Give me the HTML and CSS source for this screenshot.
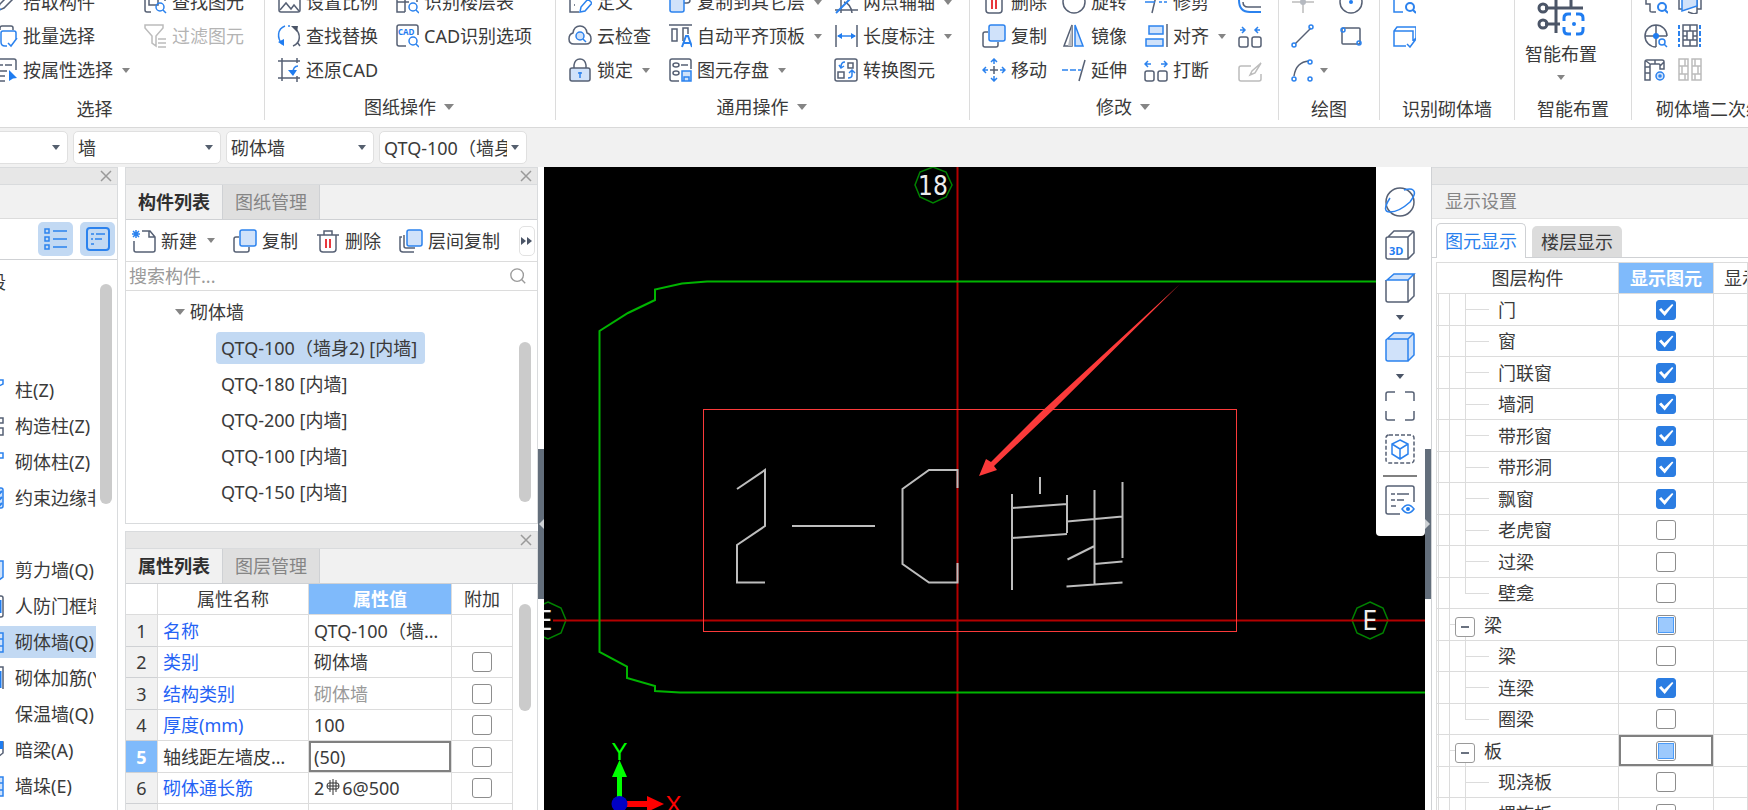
FILE: index.html
```html
<!DOCTYPE html>
<html lang="zh-CN">
<head>
<meta charset="utf-8">
<title>砌体墙</title>
<link rel="stylesheet" href="styles.css">
</head>
<body>
<svg class="sprite" aria-hidden="true">
  <symbol id="caret" viewBox="0 0 10 6"><path d="M0 0h10L5 6z" fill="currentColor"/></symbol>
  <symbol id="close" viewBox="0 0 12 12"><path d="M1 1l10 10M11 1L1 11" class="g2"/></symbol>
  <symbol id="pick" viewBox="0 0 24 24"><path d="M3 21l3-7L16 4l4 4L10 18z" class="d"/><path d="M3 21l4-2" class="b"/></symbol>
  <symbol id="batch" viewBox="0 0 24 24"><path d="M6 6V4q0-2 2-2h9q2 0 2 2v2M2 18h4" class="d"/><path d="M22 15V9q0-2-2-2H9Q7 7 7 9v9q0 4 4 4h2M14 19l3 3 6-8" class="b"/></symbol>
  <symbol id="byprop" viewBox="0 0 24 24"><path d="M2 1h18q2 0 2 2v9M4 7h5M11 7h7M4 13h9M4 18h7M2 23h9" class="d"/><path d="M15 12l8 8-4 .5-4 2.500z" class="bf"/></symbol>
  <symbol id="findel" viewBox="0 0 24 24"><path d="M8 22H4q-2 0-2-2V3h20v8M6 9h9v6H6z" class="d"/><circle cx="17" cy="17" r="4" class="b"/><path d="M20 20l3 3" class="b"/></symbol>
  <symbol id="filter" viewBox="0 0 24 24"><path d="M2 1h18v3l-7 8v10l-4-3v-7L2 4zM15 15h8M15 19h8M15 23h8" class="g"/></symbol>
  <symbol id="scale" viewBox="0 0 24 24"><rect x="2" y="3" width="21" height="19" rx="2" class="d"/><path d="M3 20l6-7 5 6 3-4 5 6" class="d"/></symbol>
  <symbol id="swap" viewBox="0 0 24 24"><path d="M8 2C0 5 0 14 5 20M13 2h-2" class="b"/><path d="M1 18l6 4V15z" class="bf"/><path d="M16 22c8-3 8-12 2-18M20 18l3 4" class="d"/><path d="M14 2l7 0-1 6z" class="df"/></symbol>
  <symbol id="restore" viewBox="0 0 24 24"><path d="M5 0v23M1 3h22M1 20h22M20 0v5M20 18v6" class="d"/><path d="M21 8q-5 0-5 7" class="b"/><path d="M11 12h9l-4 6z" class="bf"/></symbol>
  <symbol id="floor" viewBox="0 0 24 24"><path d="M10 22H2V4h20v8M2 12h12M10 4v18" class="d"/><circle cx="18" cy="17" r="4" class="b"/><path d="M21 20l3 3" class="b"/></symbol>
  <symbol id="cadopt" viewBox="0 0 24 24"><path d="M11 22H4q-2 0-2-2V3q0-2 2-2h17q2 0 2 2v8" class="d"/><text x="3" y="11" class="tiny">CAD</text><circle cx="18" cy="17" r="4" class="b"/><path d="M21 20l3 3" class="b"/></symbol>
  <symbol id="define" viewBox="0 0 24 24"><path d="M2 2v20h9M6 9h1M6 15h1M10 9h4" class="d"/><path d="M12 22l1-5 7-8 4 4-7 8z" class="b"/></symbol>
  <symbol id="cloud" viewBox="0 0 24 24"><path d="M6 20q-5 0-5-5 0-5 4-6 1-7 7-7t7 7q4 1 4 6 0 5-5 5z" class="d"/><circle cx="12" cy="12" r="4" class="bp"/><path d="M15 15l3 3" class="b"/></symbol>
  <symbol id="lock" viewBox="0 0 24 24"><path d="M6 11V7q1-6 6-6t6 6v4" class="d"/><rect x="2" y="10" width="20" height="13" rx="2" class="dp"/><path d="M12 14v6M10 15h4" class="b"/></symbol>
  <symbol id="copyfl" viewBox="0 0 24 24"><path d="M9 8V4q0-2 2-2h9q2 0 2 2v6q0 3-3 3h-3" class="d"/><path d="M4 8h10q2 0 2 2v10q0 2-2 2H4q-2 0-2-2V10q0-2 2-2z" class="bp"/></symbol>
  <symbol id="alignt" viewBox="0 0 24 24"><path d="M1 1h23M4 5h5v12H4zM20 10V4h-5v13" class="d"/><path d="M14 23l4-11h2l4 11M15 19h7" class="b2"/></symbol>
  <symbol id="disk" viewBox="0 0 24 24"><path d="M11 23H4q-2 0-2-2V3q0-2 2-2h17q2 0 2 2v8M13 7h7" class="d"/><ellipse cx="8" cy="7" rx="3" ry="2" class="d"/><ellipse cx="8" cy="15" rx="3" ry="2" class="d"/><path d="M14 13h9v10h-9zM16 23v-4h5v4" class="bp"/></symbol>
  <symbol id="aux" viewBox="0 0 24 24"><path d="M7 2v21M1 20h23M10 12q7 2 8 11" class="d"/><path d="M2 23L23 2" class="b2"/></symbol>
  <symbol id="dim" viewBox="0 0 24 24"><path d="M2 1v22M23 1v22" class="d"/><path d="M4 12h17" class="b"/><path d="M3 12l5-3v6zM22 12l-5-3v6z" class="bf"/></symbol>
  <symbol id="convert" viewBox="0 0 24 24"><rect x="1" y="1" width="22" height="22" rx="2" class="d"/><path d="M14 5h5v5h-5zM4 14h6v6H4z" class="d"/><path d="M11 4q-4 0-4 5M5 7l2 3 3-2M18 13v4q0 3-4 3M15 15l3-3 3 3" class="b"/></symbol>
  <symbol id="trash" viewBox="0 0 24 24"><path d="M1 6h22M8 6V2h8v4M4 6v14q0 3 3 3h10q3 0 3-3V6" class="d"/><path d="M10 10v9M14 10v9" class="r"/></symbol>
  <symbol id="copy" viewBox="0 0 24 24"><path d="M6 8H3Q1 8 1 10v11q0 2 2 2h11q2 0 2-2v-3" class="d"/><rect x="7" y="1" width="16" height="16" rx="2" class="bp"/></symbol>
  <symbol id="move" viewBox="0 0 24 24"><path d="M12 8v8M8 12h8" class="d"/><path d="M12 1v5M12 18v5M1 12h5M18 12h5M9 4l3-3 3 3M9 20l3 3 3-3M4 9l-3 3 3 3M20 9l3 3-3 3" class="b"/></symbol>
  <symbol id="rotate" viewBox="0 0 24 24"><circle cx="12" cy="12" r="11" class="d"/></symbol>
  <symbol id="mirror" viewBox="0 0 24 24"><path d="M10 1v21H2z" class="d"/><path d="M10 1v21H6z" class="gf"/><path d="M13 1v21h8z" class="bp"/></symbol>
  <symbol id="extend" viewBox="0 0 24 24"><path d="M23 2l-6 21" class="d"/><path d="M0 12h6M8 12h6M16 12h3" class="b"/></symbol>
  <symbol id="trim" viewBox="0 0 24 24"><path d="M13 2L8 23" class="d"/><path d="M1 12h10M15 12h3M20 12h3" class="b"/></symbol>
  <symbol id="align" viewBox="0 0 24 24"><path d="M23 0v23" class="d"/><path d="M5 2h14v8H5zM2 15h17v7H2z" class="bp"/></symbol>
  <symbol id="split" viewBox="0 0 24 24"><rect x="1" y="13" width="9" height="10" rx="2" class="d"/><rect x="14" y="13" width="9" height="10" rx="2" class="d"/><path d="M1 6h6M4 3L1 6l3 3M17 6h6M20 3l3 3-3 3" class="b"/></symbol>
  <symbol id="merge" viewBox="0 0 24 24"><rect x="1" y="13" width="9" height="10" rx="2" class="d"/><rect x="14" y="13" width="9" height="10" rx="2" class="d"/><path d="M2 6h5M4 3l3 3-3 3M17 6h5M20 3l-3 3 3 3" class="b"/></symbol>
  <symbol id="offset" viewBox="0 0 24 24"><path d="M23 17H10q-5 0-5-5" class="d"/><path d="M23 22H12Q1 22 1 10" class="b2"/></symbol>
  <symbol id="editg" viewBox="0 0 24 24"><path d="M13 8H3q-2 0-2 2v11q0 2 2 2h18q2 0 2-2v-5M12 17l2-4 9-8-6 10z" class="g"/></symbol>
  <symbol id="point" viewBox="0 0 24 24"><path d="M12 1v22M1 12h22" class="g"/><circle cx="12" cy="12" r="3" class="gf"/></symbol>
  <symbol id="line" viewBox="0 0 24 24"><path d="M4 20L20 4" class="d"/><circle cx="3" cy="21" r="2" class="b"/><circle cx="20" cy="3" r="2" class="b"/></symbol>
  <symbol id="arc" viewBox="0 0 24 24"><path d="M3 18Q5 4 18 3" class="d"/><circle cx="3" cy="21" r="2" class="b"/><circle cx="19" cy="4" r="2" class="b"/><circle cx="19" cy="21" r="2" class="b"/></symbol>
  <symbol id="circ" viewBox="0 0 24 24"><circle cx="12" cy="12" r="11" class="d"/><circle cx="12" cy="12" r="2" class="bf"/></symbol>
  <symbol id="rect" viewBox="0 0 24 24"><rect x="3" y="4" width="18" height="16" rx="1" class="d"/><circle cx="4" cy="6" r="2" class="b"/><circle cx="20" cy="19" r="2" class="b"/></symbol>
  <symbol id="recfind" viewBox="0 0 24 24"><path d="M11 22H2V5h20v4" class="b"/><circle cx="18" cy="17" r="4" class="b2"/><path d="M21 20l3 3" class="b2"/></symbol>
  <symbol id="recok" viewBox="0 0 24 24"><path d="M14 22H2V7l3-4h19v11l-3 3M2 7h19v10M15 20l3 3 6-8" class="b"/></symbol>
  <symbol id="partfind" viewBox="0 0 24 24"><path d="M2 4v10h4v7q0 1 2 1h4" class="d"/><circle cx="18" cy="17" r="4" class="b2"/><path d="M21 20l3 3" class="b2"/></symbol>
  <symbol id="ringf" viewBox="0 0 24 24"><path d="M12 1v22M1 12h22M23 12A11 11 0 1 0 12 23" class="d"/><circle cx="12" cy="12" r="3" class="bf"/><circle cx="18" cy="18" r="3" class="b"/><path d="M20 20l3 3" class="b"/></symbol>
  <symbol id="bricks" viewBox="0 0 24 24"><path d="M5 1h14v21H5zM5 7h14M5 16h14M12 1v6M9 7v9h6V7M12 16v6M5 12h4M15 12h4" class="d"/><path d="M1 1v4M1 7v5M1 14v4M1 20v3M22 1v4M22 7v5M22 14v4M22 20v3" class="b2"/></symbol>
  <symbol id="archset" viewBox="0 0 24 24"><path d="M1 22V4q0-2 2-2h15q2 0 2 2v7h-4V7q0-1-1-1H7q-1 0-1 1v15zM1 9h5M1 15h5M11 2v4M16 8l4-4M2 3l4 3" class="d"/><circle cx="16" cy="18" r="4" class="bp"/><circle cx="16" cy="18" r="1" class="b"/></symbol>
  <symbol id="bricksg" viewBox="0 0 24 24"><path d="M1 1h9v21H1zM14 1h9v21h-9zM1 8h9M1 16h9M14 8h9M14 16h9M7 1v7M4 8v8M7 16v6M17 1v7M20 8v8M17 16v6" class="g"/></symbol>
  <symbol id="panes" viewBox="0 0 24 24"><path d="M1 4v15h4M23 4v15h-4M10 22l6 2 3-1V8" class="d"/><path d="M4 3v18l15-5V3z" class="bp"/></symbol>
  <symbol id="smart" viewBox="0 0 48 48"><path d="M19 2v41M34 2v16M8 18h38M8 34h15" class="d3"/><circle cx="6" cy="18" r="4" class="d3"/><circle cx="6" cy="34" r="4" class="d3"/><path d="M27 31v-3q0-4 4-4h3M39 24h3q4 0 4 4v3M46 37v3q0 4-4 4h-3M34 44h-3q-4 0-4-4v-3" class="b3"/><circle cx="37" cy="34" r="2" class="bf"/></symbol>
  <symbol id="new" viewBox="0 0 24 24"><path d="M10 2h8l5 6v13q0 2-2 2H4q-2 0-2-2v-9M17 2v6h6" class="d"/><path d="M4 1v8M0 5h8M1 2l6 6M7 2L1 8" class="b"/></symbol>
  <symbol id="copyst" viewBox="0 0 24 24"><path d="M3 8H1v12q0 3 3 3h11M5 6v11q0 2 2 2h9" class="d"/><rect x="8" y="1" width="15" height="16" rx="2" class="bp"/></symbol>
  <symbol id="search" viewBox="0 0 20 20"><circle cx="9" cy="9" r="7" class="g2"/><path d="M14 14l4 4" class="g2"/></symbol>
  <symbol id="list" viewBox="0 0 24 24"><path d="M9 4h14M9 12h14M9 20h14" class="b"/><path d="M1 2h4v4H1zM1 10h4v4H1zM1 18h4v4H1z" class="b"/></symbol>
  <symbol id="card" viewBox="0 0 24 24"><rect x="1" y="1" width="22" height="22" rx="3" class="b2"/><path d="M5 7h3M10 7h9M5 12h2M9 12h7M5 17h3" class="b"/></symbol>
  <symbol id="col" viewBox="0 0 24 24"><path d="M1 2h22v4l-4 2h-2v14H7V8H1z" class="b"/></symbol>
  <symbol id="colz" viewBox="0 0 24 24"><path d="M16 4h7v5h-7zM16 14h7v7h-7z" class="d"/></symbol>
  <symbol id="colc" viewBox="0 0 24 24"><path d="M2 3h21v5h-4v14H8V7H2z" class="b"/></symbol>
  <symbol id="edge" viewBox="0 0 24 24"><rect x="2" y="2" width="21" height="20" rx="2" class="bp"/><path d="M14 13l8-8M14 19l8-8M18 21l4-4" class="b2"/></symbol>
  <symbol id="shear" viewBox="0 0 24 24"><path d="M4 3h19v16l-4 3H4z" class="bp"/><path d="M19 22V6" class="b"/></symbol>
  <symbol id="doorf" viewBox="0 0 24 24"><rect x="2" y="2" width="21" height="21" rx="2" class="d"/><path d="M20 6v13" class="b3"/></symbol>
  <symbol id="wallb" viewBox="0 0 24 24"><path d="M2 3h21v19H2zM2 9h21M2 16h21M18 3v6M14 9v7M18 16v6" class="bp"/></symbol>
  <symbol id="rebar" viewBox="0 0 24 24"><path d="M2 1h21v22" class="d"/><path d="M20 5v17" class="b3"/></symbol>
  <symbol id="beam" viewBox="0 0 24 24"><path d="M2 4h21v11l-5 4H2z" class="d"/><path d="M2 3h21v8H2z" class="bf"/></symbol>
  <symbol id="orbit" viewBox="0 0 32 32"><circle cx="16" cy="16" r="14" class="d"/><path d="M6 12Q-3 26 6 26q9 0 20-10 7-9 3-12-2-2-9 0" class="b"/></symbol>
  <symbol id="cube3" viewBox="0 0 32 32"><path d="M4 8h20v22H4q-2 0-2-2V10q0-2 2-2zM4 8l6-6h18q2 0 2 2v20l-6 6M24 8l6-6" class="d"/><text x="5" y="26" class="three">3D</text></symbol>
  <symbol id="cubew" viewBox="0 0 32 32"><path d="M24 8v22H4q-2 0-2-2V8M30 2v22l-6 6" class="d"/><path d="M3 8l7-6h20l-6 6z" class="bp"/></symbol>
  <symbol id="cubeb" viewBox="0 0 32 32"><path d="M4 8h20v22H4q-2 0-2-2V9l8-7h18q2 0 2 2v20l-6 6M24 8l6-6" class="bp"/></symbol>
  <symbol id="frame" viewBox="0 0 32 32"><path d="M2 11V4q0-2 2-2h7M21 2h7q2 0 2 2v7M30 21v7q0 2-2 2h-7M11 30H4q-2 0-2-2v-7" class="d"/></symbol>
  <symbol id="dcube" viewBox="0 0 32 32"><rect x="2" y="2" width="28" height="28" rx="3" class="d dash"/><path d="M16 7l8 4v10l-8 5-8-5V11zM8 11l8 5 8-5M16 16v10" class="b"/></symbol>
  <symbol id="eyecard" viewBox="0 0 32 32"><path d="M16 30H4q-2 0-2-2V4q0-2 2-2h24q2 0 2 2v14M7 10h4M13 10h12M7 16h4M13 16h7M7 22h5" class="d"/><path d="M18 25q6-8 12 0-6 8-12 0z" class="b"/><circle cx="24" cy="25" r="2" class="bf"/></symbol>
</svg>

<header class="ribbon">
  <section class="group group-select">
    <div class="tools">
      <button class="tool"><svg><use href="#pick"/></svg>拾取构件</button>
      <button class="tool"><svg><use href="#findel"/></svg>查找图元</button>
      <button class="tool"><svg><use href="#batch"/></svg>批量选择</button>
      <button class="tool off" disabled><svg><use href="#filter"/></svg>过滤图元</button>
      <button class="tool wide"><svg><use href="#byprop"/></svg>按属性选择<svg class="caret"><use href="#caret"/></svg></button>
    </div>
    <h2 class="caption">选择</h2>
  </section>
  <section class="group group-drawing">
    <div class="tools">
      <button class="tool"><svg><use href="#scale"/></svg>设置比例</button>
      <button class="tool"><svg><use href="#floor"/></svg>识别楼层表</button>
      <button class="tool"><svg><use href="#swap"/></svg>查找替换</button>
      <button class="tool"><svg><use href="#cadopt"/></svg>CAD识别选项</button>
      <button class="tool"><svg><use href="#restore"/></svg>还原CAD</button>
    </div>
    <h2 class="caption more">图纸操作<svg class="caret big"><use href="#caret"/></svg></h2>
  </section>
  <section class="group group-common">
    <div class="tools">
      <button class="tool"><svg><use href="#define"/></svg>定义</button>
      <button class="tool"><svg><use href="#copyfl"/></svg>复制到其它层<svg class="caret"><use href="#caret"/></svg></button>
      <button class="tool"><svg><use href="#aux"/></svg>两点辅轴<svg class="caret"><use href="#caret"/></svg></button>
      <button class="tool"><svg><use href="#cloud"/></svg>云检查</button>
      <button class="tool"><svg><use href="#alignt"/></svg>自动平齐顶板<svg class="caret"><use href="#caret"/></svg></button>
      <button class="tool"><svg><use href="#dim"/></svg>长度标注<svg class="caret"><use href="#caret"/></svg></button>
      <button class="tool"><svg><use href="#lock"/></svg>锁定<svg class="caret"><use href="#caret"/></svg></button>
      <button class="tool"><svg><use href="#disk"/></svg>图元存盘<svg class="caret"><use href="#caret"/></svg></button>
      <button class="tool"><svg><use href="#convert"/></svg>转换图元</button>
    </div>
    <h2 class="caption more">通用操作<svg class="caret big"><use href="#caret"/></svg></h2>
  </section>
  <section class="group group-modify">
    <div class="tools">
      <button class="tool"><svg><use href="#trash"/></svg>删除</button>
      <button class="tool"><svg><use href="#rotate"/></svg>旋转</button>
      <button class="tool"><svg><use href="#trim"/></svg>修剪</button>
      <button class="tool" aria-label="偏移"><svg><use href="#offset"/></svg></button>
      <button class="tool"><svg><use href="#copy"/></svg>复制</button>
      <button class="tool"><svg><use href="#mirror"/></svg>镜像</button>
      <button class="tool"><svg><use href="#align"/></svg>对齐<svg class="caret"><use href="#caret"/></svg></button>
      <button class="tool" aria-label="合并"><svg><use href="#merge"/></svg></button>
      <button class="tool"><svg><use href="#move"/></svg>移动</button>
      <button class="tool"><svg><use href="#extend"/></svg>延伸</button>
      <button class="tool"><svg><use href="#split"/></svg>打断</button>
      <button class="tool" aria-label="编辑" disabled><svg><use href="#editg"/></svg></button>
    </div>
    <h2 class="caption more">修改<svg class="caret big"><use href="#caret"/></svg></h2>
  </section>
  <section class="group group-draw">
    <div class="tools">
      <button class="tool" aria-label="点" disabled><svg><use href="#point"/></svg></button>
      <button class="tool" aria-label="圆"><svg><use href="#circ"/></svg></button>
      <button class="tool" aria-label="直线"><svg><use href="#line"/></svg></button>
      <button class="tool" aria-label="矩形"><svg><use href="#rect"/></svg></button>
      <button class="tool tight" aria-label="弧线"><svg><use href="#arc"/></svg><svg class="caret"><use href="#caret"/></svg></button>
    </div>
    <h2 class="caption">绘图</h2>
  </section>
  <section class="group group-detect">
    <div class="tools">
      <button class="tool" aria-label="识别"><svg><use href="#recfind"/></svg></button>
      <button class="tool" aria-label="校核"><svg><use href="#recok"/></svg></button>
    </div>
    <h2 class="caption">识别砌体墙</h2>
  </section>
  <section class="group group-smart">
    <button class="tool-big"><svg class="smart"><use href="#smart"/></svg>智能布置<svg class="caret"><use href="#caret"/></svg></button>
    <h2 class="caption">智能布置</h2>
  </section>
  <section class="group group-edit">
    <div class="tools">
      <button class="tool" aria-label="查找"><svg><use href="#partfind"/></svg></button>
      <button class="tool" aria-label="立面"><svg><use href="#panes"/></svg></button>
      <button class="tool" aria-label="定位"><svg><use href="#ringf"/></svg></button>
      <button class="tool" aria-label="砌块"><svg><use href="#bricks"/></svg></button>
      <button class="tool" aria-label="洞口"><svg><use href="#archset"/></svg></button>
      <button class="tool" aria-label="排布" disabled><svg><use href="#bricksg"/></svg></button>
    </div>
    <h2 class="caption">砌体墙二次编辑</h2>
  </section>
</header>

<nav class="combos">
  <div class="combo"><select aria-label="楼层"><option></option></select><svg class="caret"><use href="#caret"/></svg></div>
  <div class="combo"><select aria-label="构件大类"><option>墙</option></select><svg class="caret"><use href="#caret"/></svg></div>
  <div class="combo"><select aria-label="构件类型"><option>砌体墙</option></select><svg class="caret"><use href="#caret"/></svg></div>
  <div class="combo"><select aria-label="构件"><option>QTQ-100（墙身2）</option></select><svg class="caret"><use href="#caret"/></svg></div>
</nav>

<main class="work">
  <aside class="modules">
    <div class="strip"><button class="close" aria-label="关闭"><svg><use href="#close"/></svg></button></div>
    <div class="modules-head"></div>
    <div class="modules-view">
      <button class="view on" aria-label="列表"><svg><use href="#list"/></svg></button>
      <button class="view on" aria-label="卡片"><svg><use href="#card"/></svg></button>
    </div>
    <div class="modules-body">
      <ul class="module-list">
        <li><a class="root">施工段</a></li>
        <li></li>
        <li></li>
        <li><a><svg><use href="#col"/></svg>柱(Z)</a></li>
        <li><a><svg><use href="#colz"/></svg>构造柱(Z)</a></li>
        <li><a><svg><use href="#colc"/></svg>砌体柱(Z)</a></li>
        <li><a><svg><use href="#edge"/></svg>约束边缘非阴影区</a></li>
        <li></li>
        <li><a><svg><use href="#shear"/></svg>剪力墙(Q)</a></li>
        <li><a><svg><use href="#doorf"/></svg>人防门框墙(RF)</a></li>
        <li class="current"><a><svg><use href="#wallb"/></svg>砌体墙(Q)</a></li>
        <li><a><svg><use href="#rebar"/></svg>砌体加筋(Y)</a></li>
        <li><a><svg></svg>保温墙(Q)</a></li>
        <li><a><svg><use href="#beam"/></svg>暗梁(A)</a></li>
        <li><a><svg><use href="#wallb"/></svg>墙垛(E)</a></li>
        <li><a><svg><use href="#col"/></svg></a></li>
      </ul>
      <div class="rail"><div class="thumb thumb-modules"></div></div>
    </div>
  </aside>

  <div class="docks">
    <section class="dock dock-list">
      <div class="strip"><button class="close" aria-label="关闭"><svg><use href="#close"/></svg></button></div>
      <div class="tabs"><button class="tab on">构件列表</button><button class="tab">图纸管理</button></div>
      <div class="bar">
        <button class="tool"><svg><use href="#new"/></svg>新建<svg class="caret"><use href="#caret"/></svg></button>
        <button class="tool"><svg><use href="#copy"/></svg>复制</button>
        <button class="tool"><svg><use href="#trash"/></svg>删除</button>
        <button class="tool"><svg><use href="#copyst"/></svg>层间复制</button>
        <button class="overflow" aria-label="更多"><svg viewBox="0 0 12 8"><path d="M0 0l5 4-5 4zM6 0l5 4-5 4z" class="df"/></svg></button>
      </div>
      <label class="search"><input type="text" placeholder="搜索构件..."><svg><use href="#search"/></svg></label>
      <div class="tree-wrap">
        <ul class="tree">
          <li class="branch"><svg class="caret big"><use href="#caret"/></svg>砌体墙</li>
          <li><span class="leaf picked">QTQ-100（墙身2) [内墙]</span></li>
          <li><span class="leaf">QTQ-180 [内墙]</span></li>
          <li><span class="leaf">QTQ-200 [内墙]</span></li>
          <li><span class="leaf">QTQ-100 [内墙]</span></li>
          <li><span class="leaf">QTQ-150 [内墙]</span></li>
        </ul>
        <div class="rail"><div class="thumb thumb-tree"></div></div>
      </div>
    </section>
    <section class="dock dock-props">
      <div class="strip"><button class="close" aria-label="关闭"><svg><use href="#close"/></svg></button></div>
      <div class="tabs"><button class="tab on">属性列表</button><button class="tab">图层管理</button></div>
      <div class="props-wrap">
        <div class="props-body">
          <table class="grid props">
            <colgroup><col class="c-no"><col><col class="c-val"><col class="c-add"></colgroup>
            <thead><tr><th></th><th>属性名称</th><th class="hot">属性值</th><th>附加</th></tr></thead>
            <tbody>
              <tr><th>1</th><td class="link">名称</td><td>QTQ-100（墙身2）</td><td></td></tr>
              <tr><th>2</th><td class="link">类别</td><td>砌体墙</td><td class="tick"><input type="checkbox" aria-label="类别"></td></tr>
              <tr><th>3</th><td class="link">结构类别</td><td class="dim">砌体墙</td><td class="tick"><input type="checkbox" aria-label="结构类别"></td></tr>
              <tr><th>4</th><td class="link">厚度(mm)</td><td>100</td><td class="tick"><input type="checkbox" aria-label="厚度"></td></tr>
              <tr><th class="hot">5</th><td>轴线距左墙皮距离</td><td class="focus">(50)</td><td class="tick"><input type="checkbox" aria-label="轴线距左墙皮"></td></tr>
              <tr><th>6</th><td class="link">砌体通长筋</td><td>2<svg class="rebar" viewBox="0 0 14 16"><path d="M7 0v16M3 4h8q2 0 2 3t-2 3H3Q1 10 1 7t2-3zM4 1v12M10 1v12M1 7h12" class="k"/></svg>6@500</td><td class="tick"><input type="checkbox" aria-label="砌体通长筋"></td></tr>
              <tr><th></th><td></td><td></td><td class="tick"><input type="checkbox" aria-label="其它"></td></tr>
            </tbody>
          </table>
        </div>
        <div class="rail"><div class="thumb thumb-props"></div></div>
      </div>
    </section>
  </div>

  <button class="splitter" aria-label="收起左侧"><svg viewBox="0 0 6 150"><path d="M6 70v10l-5-5z"/></svg></button>

  <section class="canvas">
    <svg class="drawing" viewBox="544 167 881 643" preserveAspectRatio="xMinYMin slice">
      <g class="marks">
        <path d="M933 167l13 5 6 13-6 12-13 6-13-6-5-12 5-13z"/>
        <path d="M548 602l13 6 5 12-5 13-13 6-13-6-5-13 5-12z"/>
        <path d="M1370 602l13 6 5 12-5 13-13 6-13-6-5-13 5-12z"/>
      </g>
      <path class="axis" d="M957.500 167v643M553 620.500H1425"/>
      <path class="outline" d="M1425 281.500H707L682 283.500 655 289.500V300L628 313 599.500 331V652L627 666.500V678L655 686V691L680 692.500H1425"/>
      <g class="labels"><text x="933" y="195">18</text><text x="545" y="630">E</text><text x="1370" y="630">E</text></g>
      <path class="strokes" d="M737 489L765 470V526L737 545V582.500H765M792 526H875M957.500 488V470H929L902.500 489V564L929 582.500H957.500V563M1012 494V590M1012 508L1067 504M1067 495V533M1012 538L1067 534M1040 477V494M1094.500 490V584M1122.500 482V558M1067 521.500L1122.500 516.500M1067.500 559.500L1094.500 546M1094.500 564L1122.500 561.500M1066.500 586.500L1122.500 582.500"/>
      <rect class="callout" x="703.500" y="409.500" width="533" height="222"/>
      <path class="pointer" d="M979 476L986 459 991 462 1040 413 1180 284 1052 411 994 466 997 470z"/>
      <path d="M617 798V777h-5l7.500-17 7.500 17h-5v21z" fill="#0f0"/>
      <path d="M626 801h21v-5l17 8-17 8v-5h-21z" fill="#f00"/>
      <circle cx="619.500" cy="804" r="8" fill="#0000c4"/>
      <text x="619.500" y="760" class="ax-y">Y</text>
      <text x="673.500" y="813" class="ax-x">X</text>
    </svg>
    <div class="view-bar">
      <button aria-label="动态观察"><svg><use href="#orbit"/></svg></button>
      <button aria-label="三维"><svg><use href="#cube3"/></svg></button>
      <button aria-label="俯视"><svg><use href="#cubew"/></svg></button>
      <svg class="caret dark"><use href="#caret"/></svg>
      <button aria-label="实体"><svg><use href="#cubeb"/></svg></button>
      <svg class="caret dark"><use href="#caret"/></svg>
      <button aria-label="全屏"><svg><use href="#frame"/></svg></button>
      <button aria-label="局部三维"><svg><use href="#dcube"/></svg></button>
      <hr>
      <button aria-label="显示设置"><svg><use href="#eyecard"/></svg></button>
    </div>
  </section>

  <button class="splitter" aria-label="收起右侧"><svg viewBox="0 0 6 150"><path d="M0 70v10l5-5z"/></svg></button>

  <aside class="display">
    <div class="strip"></div>
    <h2 class="display-title">显示设置</h2>
    <div class="pills"><button class="pill on">图元显示</button><button class="pill">楼层显示</button></div>
    <div class="layers-wrap">
      <table class="grid layers">
        <colgroup><col class="c-name"><col class="c-show"><col></colgroup>
        <thead><tr><th>图层构件</th><th class="hot">显示图元</th><th class="cut">显示名称</th></tr></thead>
        <tbody>
          <tr><td class="child">门</td><td class="tick"><input type="checkbox" aria-label="门" checked></td><td></td></tr>
          <tr><td class="child">窗</td><td class="tick"><input type="checkbox" aria-label="窗" checked></td><td></td></tr>
          <tr><td class="child">门联窗</td><td class="tick"><input type="checkbox" aria-label="门联窗" checked></td><td></td></tr>
          <tr><td class="child">墙洞</td><td class="tick"><input type="checkbox" aria-label="墙洞" checked></td><td></td></tr>
          <tr><td class="child">带形窗</td><td class="tick"><input type="checkbox" aria-label="带形窗" checked></td><td></td></tr>
          <tr><td class="child">带形洞</td><td class="tick"><input type="checkbox" aria-label="带形洞" checked></td><td></td></tr>
          <tr><td class="child">飘窗</td><td class="tick"><input type="checkbox" aria-label="飘窗" checked></td><td></td></tr>
          <tr><td class="child">老虎窗</td><td class="tick"><input type="checkbox" aria-label="老虎窗"></td><td></td></tr>
          <tr><td class="child">过梁</td><td class="tick"><input type="checkbox" aria-label="过梁"></td><td></td></tr>
          <tr><td class="child last">壁龛</td><td class="tick"><input type="checkbox" aria-label="壁龛"></td><td></td></tr>
          <tr><td class="parent"><button class="fold" aria-label="折叠梁"></button>梁</td><td class="tick"><input type="checkbox" class="partial" aria-label="梁类"></td><td></td></tr>
          <tr><td class="child">梁</td><td class="tick"><input type="checkbox" aria-label="梁"></td><td></td></tr>
          <tr><td class="child">连梁</td><td class="tick"><input type="checkbox" aria-label="连梁" checked></td><td></td></tr>
          <tr><td class="child last">圈梁</td><td class="tick"><input type="checkbox" aria-label="圈梁"></td><td></td></tr>
          <tr><td class="parent"><button class="fold" aria-label="折叠板"></button>板</td><td class="tick focus"><input type="checkbox" class="partial" aria-label="板类"></td><td></td></tr>
          <tr><td class="child">现浇板</td><td class="tick"><input type="checkbox" aria-label="现浇板"></td><td></td></tr>
          <tr><td class="child">螺旋板</td><td class="tick"><input type="checkbox" aria-label="螺旋板"></td><td></td></tr>
        </tbody>
      </table>
    </div>
  </aside>
</main>
</body>
</html>
```
FILE: styles.css
```css
* { box-sizing: border-box; }

body {
  margin: 0;
  height: 100vh;
  display: flex;
  flex-direction: column;
  overflow: hidden;
  background: #fff;
  color: #3a3a3a;
  font: 18px/24px "Noto Sans", "Noto Sans CJK SC", sans-serif;
}

button, select, input { font: inherit; color: inherit; }
button { padding: 0; border: 0; background: none; }
h2 { margin: 0; font: inherit; }
ul { margin: 0; padding: 0; list-style: none; }
svg { display: block; flex: none; }
.sprite { position: absolute; width: 0; height: 0; }

/* icon strokes and fills */
.d, .b, .b2, .b3, .d3, .g, .g2, .r, .k { fill: none; }
.d, .dp { stroke: #566074; stroke-width: 1.5; }
.d3 { stroke: #4b5567; stroke-width: 3; }
.b, .bp { stroke: #2b82ee; stroke-width: 1.5; }
.b2 { stroke: #2b82ee; stroke-width: 2; }
.b3 { stroke: #1f7cf0; stroke-width: 3; }
.bp, .dp { fill: #d0e2fa; }
.bf { fill: #1f7cf0; }
.df { fill: #4b5567; }
.g { stroke: #bcbcbc; stroke-width: 1.5; }
.g2 { stroke: #9a9a9a; stroke-width: 1.5; }
.gf { fill: #b5b9c0; }
.r { stroke: #e8383d; stroke-width: 2; }
.k { stroke: #333; stroke-width: 1; }
.dash { stroke-dasharray: 4 2; }
.tiny { font: bold 8px "Open Sans", sans-serif; fill: #1f7cf0; }
.three { font: bold 11px "Open Sans", sans-serif; fill: #1f7cf0; }

.caret { width: 8px; height: 5px; color: #858585; }
.caret.big { width: 10px; height: 6px; }
.caret.dark { width: 10px; height: 5px; color: #4b5567; }

/* ribbon */
.ribbon {
  display: flex;
  flex: none;
  height: 128px;
  padding-bottom: 7px;
  border-bottom: 1px solid #d9d9d9;
  overflow: hidden;
}
.group {
  flex: none;
  display: flex;
  flex-direction: column;
  justify-content: flex-end;
  padding-left: 12px;
  border-right: 1px solid #dcdcdc;
}
.tools { display: grid; grid-auto-rows: 34px; align-items: center; }
.tool {
  display: flex;
  align-items: center;
  gap: 5px;
  white-space: nowrap;
}
.tool svg { width: 24px; height: 24px; }
.tool .caret { width: 8px; height: 5px; margin-left: 4px; }
.tool.tight .caret { margin-left: 0; }
.tool.off { color: #b4b4b4; }
.tool.wide { grid-column: 1 / -1; }
.caption {
  flex: none;
  display: flex;
  justify-content: center;
  align-items: center;
  gap: 8px;
  height: 33px;
  margin-left: -12px;
  padding-top: 10px;
  white-space: nowrap;
}
.caption.more { padding: 6px 2px 0 0; }

.group-select { width: 340px; margin-left: -75px; padding-left: 69px; }
.group-select .caption { margin-left: -69px; }
.group-select .tools { grid-template-columns: 149px auto; }
.group-drawing { width: 291px; }
.group-drawing .tools { grid-template-columns: 118px auto; }
.group-common { width: 414px; }
.group-common .tools { grid-template-columns: 100px 166px auto; }
.group-modify { width: 309px; }
.group-modify .tools { grid-template-columns: 80px 82px 94px auto; }
.group-draw { width: 101px; }
.group-draw .tools { grid-template-columns: 48px auto; }
.group-detect { width: 135px; }
.group-detect .tools { padding-bottom: 34px; }
.group-smart { width: 117px; }
.group-edit { flex: 1 0 117px; min-width: 0; }
.group-edit .tools { grid-template-columns: 34px auto; }
.group-edit .caption { justify-content: flex-start; padding-left: 24px; }

.tool-big {
  align-self: flex-start;
  display: flex;
  flex-direction: column;
  align-items: center;
  padding: 0 0 7px;
  margin-left: -2px;
}
.smart { width: 48px; height: 48px; margin-bottom: 4px; }
.tool-big .caret { margin-top: 9px; }

/* selectors under the ribbon */
.combos {
  flex: none;
  display: flex;
  gap: 5px;
  height: 39px;
  padding-top: 3px;
  background: #f1f1f1;
}
.combo { position: relative; width: 148px; height: 33px; }
.combo:first-child { margin-left: -80px; }
.combo select {
  appearance: none;
  width: 100%;
  height: 100%;
  padding: 0 19px 0 4px;
  border: 1px solid #e0e0e0;
  border-radius: 5px;
  background: #fff;
}
.combo .caret { position: absolute; right: 8px; top: 14px; color: #555f6e; }

.work { flex: 1; min-height: 0; display: flex; }

.strip {
  flex: none;
  display: flex;
  justify-content: flex-end;
  align-items: center;
  height: 18px;
  padding-right: 5px;
  background: #e7e7e7;
  border: solid #d9dbdd;
  border-width: 1px 0;
}
.close svg { width: 12px; height: 12px; }

.rail { flex: none; width: 18px; }
.thumb { width: 12px; border-radius: 6px; background: #cbcbcb; }

/* module navigator */
.modules {
  flex: none;
  display: flex;
  flex-direction: column;
  width: 118px;
  border-right: 1px solid #d9dbdd;
}
.modules-head { height: 34px; background: #f1f1f1; border-bottom: 1px solid #dcdcdc; }
.modules-view {
  display: flex;
  justify-content: flex-end;
  gap: 7px;
  padding: 3px 2px;
  height: 41px;
  border-bottom: 1px solid #cfd1d4;
}
.view {
  display: grid;
  place-items: center;
  width: 35px;
  height: 34px;
  border-radius: 5px;
  background: #c2d9f3;
}
.view svg { width: 24px; height: 24px; }
.modules-body { flex: 1; min-height: 0; display: flex; overflow: hidden; }
.module-list {
  display: grid;
  grid-auto-rows: 32px;
  gap: 4px;
  width: 96px;
  padding-top: 6px;
  overflow: hidden;
}
.module-list a {
  display: flex;
  align-items: center;
  gap: 11px;
  height: 32px;
  margin-left: -20px;
  white-space: nowrap;
}
.module-list a.root { margin-left: -48px; }
.module-list svg { width: 24px; height: 24px; }
.module-list .current { background: #c2d9f3; }
.modules-body .rail { padding: 24px 0 0 4px; }
.thumb-modules { height: 220px; }

/* middle docks */
.docks {
  flex: none;
  display: flex;
  flex-direction: column;
  gap: 7px;
  width: 413px;
  margin-left: 7px;
}
.dock { display: flex; flex-direction: column; border: solid #d9dbdd; border-width: 0 1px; }
.dock-list { flex: none; border-bottom-width: 1px; }
.dock-props { flex: 1; min-height: 0; overflow: hidden; }
.tabs {
  flex: none;
  display: flex;
  height: 35px;
  background: #f1f1f1;
  border-bottom: 1px solid #cfd1d4;
}
.tab { width: 97px; border-right: 1px solid #cfd1d4; background: #dfdfdf; color: #858585; }
.tab.on { background: #f1f1f1; color: #2f2f2f; font-weight: 700; }
.bar {
  display: flex;
  align-items: center;
  height: 42px;
  padding: 0 2px 0 6px;
  border-bottom: 1px solid #dcdcdc;
}
.bar .tool + .tool { margin-left: 18px; }
.bar .tool .caret { margin: 0 0 0 5px; }
.overflow {
  display: grid;
  place-items: center;
  width: 16px;
  height: 30px;
  margin-left: auto;
  border: 1px solid #e2e2e2;
  border-radius: 5px;
}
.overflow svg { width: 12px; height: 8px; }
.search {
  display: flex;
  align-items: center;
  height: 29px;
  padding: 0 10px 0 3px;
  border-bottom: 1px solid #dcdcdc;
}
.search input { flex: 1; min-width: 0; padding: 0; border: 0; outline: 0; background: none; }
.search input::placeholder { color: #9a9a9a; }
.search svg { width: 18px; height: 18px; }
.tree-wrap { display: flex; height: 232px; }
.tree { flex: 1; padding-top: 5px; }
.tree li { display: flex; height: 32px; margin-bottom: 4px; align-items: center; }
.tree .branch { gap: 5px; padding-left: 49px; }
.leaf { margin-left: 90px; padding: 4px 8px 4px 5px; border-radius: 4px; white-space: nowrap; }
.leaf.picked { background: #c2d9f3; }
.tree-wrap .rail { padding-top: 51px; }
.thumb-tree { height: 160px; }

/* tables */
.grid {
  width: 100%;
  border-collapse: separate;
  border-spacing: 0;
  table-layout: fixed;
}
.grid tr { height: 31px; }
.grid tbody tr:nth-child(odd) { height: 32px; }
.grid th, .grid td {
  padding: 0 5px;
  border: solid #dcdcdc;
  border-width: 0 1px 1px 0;
  font-weight: 400;
  text-align: left;
  white-space: nowrap;
  overflow: hidden;
  text-overflow: ellipsis;
}
.grid thead th { text-align: center; }
.grid .hot { background: #7fbafb; color: #fff; font-weight: 700; }
.grid .link { color: #2563f5; }
.grid .dim { color: #9a9a9a; }
.grid .focus { box-shadow: inset 0 0 0 2px #808080; }
.grid .tick { padding: 0; text-overflow: clip; }
.tick input {
  appearance: none;
  display: grid;
  place-items: center;
  width: 20px;
  height: 20px;
  margin: 0 auto;
  border: 1px solid #8d8d8d;
  border-radius: 3px;
  background: #fff;
}
.tick input:checked { background: #2b7de2; border-color: #2b7de2; }
.tick input:checked::before {
  content: "";
  width: 16px;
  height: 14px;
  background: #fff;
  clip-path: polygon(6% 52%, 20% 40%, 40% 64%, 88% 10%, 96% 18%, 42% 96%);
}
.tick .partial::before {
  content: "";
  width: 14px;
  height: 14px;
  background: #9cc9fd;
  border: 1px solid #4b9bf8;
}

.props-wrap { display: flex; min-height: 0; }
.props-body { flex: 1; min-width: 0; }
.props tbody th { padding: 0; background: #f1f1f1; text-align: center; border-bottom-color: #cfd1d4; }
.props tbody th.hot { background: #7fbafb; }
.c-no { width: 32px; }
.c-val { width: 143px; }
.c-add { width: 61px; }
.props-wrap .rail { width: 24px; padding: 20px 6px 0; }
.thumb-props { height: 107px; }
.rebar { display: inline-block; width: 14px; height: 16px; margin: 0 2px; vertical-align: 0; }

/* splitters */
.splitter { flex: none; width: 6px; display: flex; align-items: flex-start; padding-top: 282px; }
.splitter svg { width: 6px; height: 150px; background: #636e7b; }
.splitter path { fill: #cdd1d5; }

/* model canvas */
.canvas { position: relative; flex: 1; min-width: 0; background: #000; overflow: hidden; }
.drawing { position: absolute; inset: 0; width: 100%; height: 100%; }
.marks path { fill: none; stroke: #008200; stroke-width: 1.5; }
.axis { fill: none; stroke: #b40000; stroke-width: 2; }
.outline { fill: none; stroke: #00b400; stroke-width: 2; }
.strokes { fill: none; stroke: #bdbdbd; stroke-width: 2; }
.callout { fill: none; stroke: #fb3a3a; }
.pointer { fill: #fb3a3a; }
.labels text {
  fill: #eee;
  font: 26px "DejaVu Sans Condensed", "DejaVu Sans", sans-serif;
  text-anchor: middle;
}
.ax-x, .ax-y { font: 24px "Liberation Sans", sans-serif; text-anchor: middle; }
.ax-x { fill: #f00; }
.ax-y { fill: #0f0; }
.view-bar {
  position: absolute;
  top: 0;
  right: 0;
  display: flex;
  flex-direction: column;
  align-items: center;
  gap: 11px;
  width: 49px;
  padding: 19px 2px 20px 0;
  border-radius: 0 0 4px 4px;
  background: #fff;
}
.view-bar button svg { width: 32px; height: 32px; }
.view-bar hr { width: 34px; height: 2px; margin: -1px 0 -4px; border: 0; background: #808080; }

/* display settings */
.display {
  flex: none;
  display: flex;
  flex-direction: column;
  width: 317px;
  border-left: 1px solid #cfd1d4;
  overflow: hidden;
}
.display-title {
  flex: none;
  height: 34px;
  padding: 4px 13px;
  color: #858585;
  background: #f1f1f1;
  border-bottom: 1px solid #e2e2e2;
}
.pills {
  flex: none;
  display: flex;
  align-items: flex-end;
  gap: 6px;
  height: 39px;
  padding-left: 4px;
  border-bottom: 1px solid #cfd1d4;
}
.pill { width: 90px; height: 31px; border-radius: 5px 5px 0 0; background: #dcdcdc; }
.pill.on {
  height: 35px;
  margin-bottom: -1px;
  border: solid #cfd1d4;
  border-width: 1px 1px 0;
  background: #fff;
  color: #2b82ee;
}
.layers-wrap { margin: 4px 0 0 4px; border: solid #dcdcdc; border-width: 1px 0 0 1px; }
.layers .cut { padding-left: 10px; text-align: left; text-overflow: clip; }
.c-name { width: 182px; }
.c-show { width: 95px; }
.layers .child, .layers .parent {
  background-repeat: no-repeat;
  background-image:
    linear-gradient(#dcdcdc, #dcdcdc),
    linear-gradient(#dcdcdc, #dcdcdc),
    linear-gradient(#dcdcdc, #dcdcdc),
    linear-gradient(#dcdcdc, #dcdcdc);
  background-size: 1px 100%, 1px 100%, 1px 100%, 24px 1px;
  background-position: 1px 0, 12px 0, 28px 0, 28px 50%;
}
.layers .child { padding-left: 61px; }
.layers .child.last { background-size: 1px 100%, 1px 100%, 1px 50%, 24px 1px; }
.layers .parent {
  padding-left: 18px;
  background-size: 1px 100%, 1px 100%, 1px 50%, 8px 1px;
  background-position: 1px 0, 12px 0, 28px 100%, 12px 50%;
}
.fold {
  position: relative;
  display: inline-block;
  width: 20px;
  height: 20px;
  margin-right: 9px;
  border: 1px solid #9a9a9a;
  border-radius: 3px;
  background: #fff;
  vertical-align: -4px;
}
.fold::before {
  content: "";
  position: absolute;
  left: 5px;
  top: 8px;
  width: 8px;
  height: 2px;
  background: #6a7280;
}
```
